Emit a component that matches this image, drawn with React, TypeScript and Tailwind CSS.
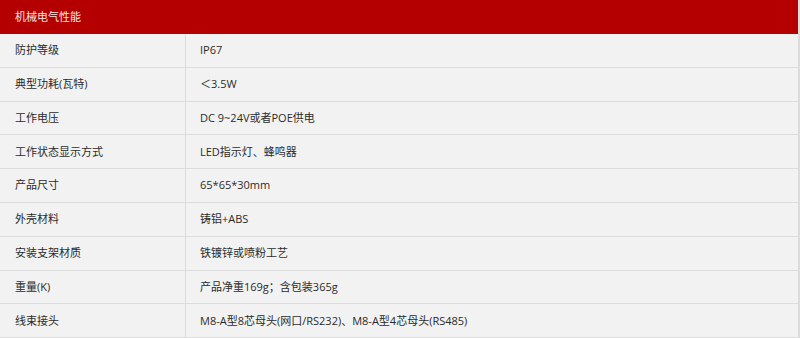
const rows: [string, string][] = [
  ["防护等级", "IP67"],
  ["典型功耗(瓦特)", "＜3.5W"],
  ["工作电压", "DC 9~24V或者POE供电"],
  ["工作状态显示方式", "LED指示灯、蜂鸣器"],
  ["产品尺寸", "65*65*30mm"],
  ["外壳材料", "铸铝+ABS"],
  ["安装支架材质", "铁镀锌或喷粉工艺"],
  ["重量(K)", "产品净重169g；含包装365g"],
  ["线束接头", "M8-A型8芯母头(网口/RS232)、M8-A型4芯母头(RS485)"],
];

export default function App() {
  return (
    <div
      className="w-[800px] h-[338px] overflow-hidden bg-[#f2f2f2] border-r-2 border-[#dcdcdc] text-[11px] text-[#2b2b2b]"
      style={{ fontFamily: '"Open Sans", "Noto Sans CJK SC", sans-serif' }}
    >
      <div className="h-[34px] bg-[#b40000] text-[#f6e6e6] flex items-center px-[15px]">
        机械电气性能
      </div>
      {rows.map(([label, value]) => (
        <div key={label} className="flex h-[33.8px] border-b border-[#dcdcdc]">
          <div className="w-[186px] shrink-0 border-r border-[#dcdcdc] flex items-center px-[15px]">
            {label}
          </div>
          <div className="flex-1 flex items-center px-[14px]">{value}</div>
        </div>
      ))}
    </div>
  );
}
